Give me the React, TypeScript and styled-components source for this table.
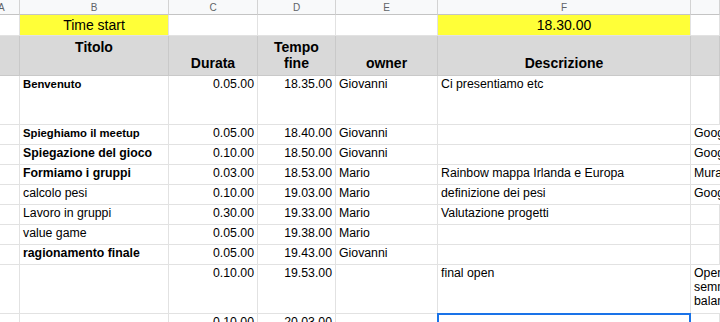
import React from "react";
import styled, { createGlobalStyle } from "styled-components";

const GlobalStyle = createGlobalStyle`
  html, body {
    margin: 0;
    padding: 0;
    background: #fff;
    overflow: hidden;
  }
  body {
    font-family: "Liberation Sans", Arial, sans-serif;
    color: #000;
  }
`;

const COLUMNS = "20px 149px 89px 78px 102px 253px 1fr";

const Sheet = styled.div`
  width: 720px;
  height: 322px;
  overflow: hidden;
  display: flex;
  flex-direction: column;
`;

const Row = styled.div<{ $height: number }>`
  display: grid;
  grid-template-columns: ${COLUMNS};
  height: ${(p) => p.$height}px;
  flex-shrink: 0;
`;

const Letter = styled.div<{ $clip?: boolean }>`
  box-sizing: border-box;
  background: #f8f9fa;
  border-right: 1px solid #d3d3d3;
  border-bottom: 1px solid #c4c4c4;
  color: #5f6368;
  font-size: 10px;
  display: flex;
  align-items: center;
  justify-content: ${(p) => (p.$clip ? "flex-start" : "center")};
  text-indent: ${(p) => (p.$clip ? "-2px" : "0")};
  overflow: hidden;
`;

type Align = "left" | "center" | "right";
type VAlign = "top" | "center" | "bottom";

const Cell = styled.div<{
  $align?: Align;
  $valign?: VAlign;
  $bold?: boolean;
  $size?: number;
  $bg?: string;
}>`
  position: relative;
  box-sizing: border-box;
  border-right: 1px solid #e2e2e2;
  border-bottom: 1px solid #e2e2e2;
  background: ${(p) => p.$bg || "#fff"};
  display: flex;
  flex-direction: column;
  justify-content: ${(p) =>
    p.$valign === "bottom" ? "flex-end" : p.$valign === "center" ? "center" : "flex-start"};
  text-align: ${(p) => p.$align || "left"};
  font-size: ${(p) => p.$size || 12.3}px;
  font-weight: ${(p) => (p.$bold ? 700 : 400)};
  line-height: 14px;
  padding: 1px 3px 0 3px;
  white-space: nowrap;
  overflow: visible;
`;

const HeadCell = styled(Cell)`
  background: #d9d9d9;
  border-right-color: #c9c9c9;
  border-bottom-color: #c9c9c9;
  font-size: 14px;
  font-weight: 700;
  line-height: 16px;
  padding: 3px 3px 4px;
  white-space: normal;
  text-align: center;
`;

const Wrapped = styled.span`
  white-space: pre;
  display: block;
  overflow: hidden;
`;

const Selection = styled.div`
  position: absolute;
  left: -1px;
  top: -1px;
  right: -1px;
  bottom: -10px;
  border: 2px solid #1a73e8;
  pointer-events: none;
`;

type Body = {
  h: number;
  title?: string;
  bold?: boolean;
  size?: number;
  dur?: string;
  end?: string;
  owner?: string;
  desc?: string;
  extra?: string;
  selected?: boolean;
};

const rows: Body[] = [
  { h: 49, title: "Benvenuto", bold: true, size: 11.3, dur: "0.05.00", end: "18.35.00", owner: "Giovanni", desc: "Ci presentiamo etc" },
  { h: 20, title: "Spieghiamo il meetup", bold: true, size: 11.3, dur: "0.05.00", end: "18.40.00", owner: "Giovanni", extra: "Google slides" },
  { h: 20, title: "Spiegazione del gioco", bold: true, dur: "0.10.00", end: "18.50.00", owner: "Giovanni", extra: "Google slides" },
  { h: 20, title: "Formiamo i gruppi", bold: true, dur: "0.03.00", end: "18.53.00", owner: "Mario", desc: "Rainbow mappa Irlanda e Europa", extra: "Mural" },
  { h: 20, title: "calcolo pesi", dur: "0.10.00", end: "19.03.00", owner: "Mario", desc: "definizione dei pesi", extra: "Google sheet" },
  { h: 20, title: "Lavoro in gruppi", dur: "0.30.00", end: "19.33.00", owner: "Mario", desc: "Valutazione progetti" },
  { h: 20, title: "value game", dur: "0.05.00", end: "19.38.00", owner: "Mario" },
  { h: 20, title: "ragionamento finale", bold: true, dur: "0.05.00", end: "19.43.00", owner: "Giovanni" },
  { h: 49, dur: "0.10.00", end: "19.53.00", desc: "final open", extra: "Open\nsemmai\nbalance" },
  { h: 30, dur: "0.10.00", end: "20.03.00", selected: true },
];

export default function App() {
  return (
    <Sheet>
      <GlobalStyle />
      <Row $height={15}>
        <Letter $clip>A</Letter>
        <Letter>B</Letter>
        <Letter>C</Letter>
        <Letter>D</Letter>
        <Letter>E</Letter>
        <Letter>F</Letter>
        <Letter />
      </Row>
      <Row $height={21}>
        <Cell />
        <Cell $bg="#ffff38" $align="center" $valign="center" $size={14} style={{ paddingTop: 0 }}>
          Time start
        </Cell>
        <Cell />
        <Cell />
        <Cell />
        <Cell $bg="#ffff38" $align="center" $valign="center" $size={14} style={{ paddingTop: 0 }}>
          18.30.00
        </Cell>
        <Cell />
      </Row>
      <Row $height={40}>
        <HeadCell />
        <HeadCell $valign="top">Titolo</HeadCell>
        <HeadCell $valign="bottom">Durata</HeadCell>
        <HeadCell $valign="top">Tempo fine</HeadCell>
        <HeadCell $valign="bottom">owner</HeadCell>
        <HeadCell $valign="bottom">Descrizione</HeadCell>
        <HeadCell />
      </Row>
      {rows.map((r, i) => (
        <Row key={i} $height={r.h}>
          <Cell />
          <Cell $bold={r.bold} $size={r.size}>
            {r.title}
          </Cell>
          <Cell $align="right">{r.dur}</Cell>
          <Cell $align="right">{r.end}</Cell>
          <Cell>{r.owner}</Cell>
          <Cell>
            {r.desc}
            {r.selected && <Selection />}
          </Cell>
          <Cell>{r.extra && <Wrapped>{r.extra}</Wrapped>}</Cell>
        </Row>
      ))}
    </Sheet>
  );
}
